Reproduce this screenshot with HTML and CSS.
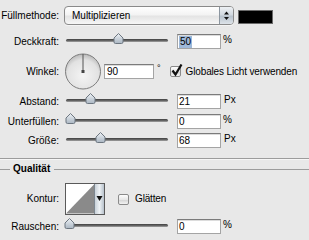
FILE: index.html
```html
<!DOCTYPE html>
<html lang="de">
<head>
<meta charset="utf-8">
<title>Schein nach außen</title>
<link rel="stylesheet" href="styles.css">
</head>
<body>
<div class="panel">
  <div class="row r-blend">
    <span class="label">Füllmethode:</span>
    <div class="select">
      <span class="select-text">Multiplizieren</span>
      <span class="select-arrows">
        <svg width="13" height="17" viewBox="0 0 13 17"><path d="M4 7.5 L6.5 4.5 L9 7.5 Z" fill="#111"/><path d="M4 10 L6.5 13 L9 10 Z" fill="#111"/></svg>
      </span>
    </div>
    <span class="swatch"></span>
  </div>

  <div class="row r-opacity">
    <span class="label">Deckkraft:</span>
    <div class="slider">
      <span class="track"></span>
      <svg class="thumb" style="left:47px" width="11" height="11" viewBox="0 0 11 11"><defs><linearGradient id="tg1" x1="0" y1="0" x2="0" y2="1"><stop offset="0" stop-color="#eef2f6"/><stop offset="1" stop-color="#aab6c2"/></linearGradient></defs><path d="M5.5 0.5 L10 5 L10 9 Q10 10.5 8.5 10.5 L2.5 10.5 Q1 10.5 1 9 L1 5 Z" fill="url(#tg1)" stroke="#6d7680"/></svg>
    </div>
    <span class="field"><span class="sel">50</span></span>
    <span class="unit">%</span>
  </div>

  <div class="row r-angle">
    <span class="label">Winkel:</span>
    <svg class="dial" width="38" height="37" viewBox="0 0 38 37">
      <defs>
        <radialGradient id="dg" cx="0.5" cy="0.62" r="0.6"><stop offset="0" stop-color="#f4f4f4"/><stop offset="0.75" stop-color="#e2e2e2"/><stop offset="1" stop-color="#bdbdbd"/></radialGradient>
      </defs>
      <circle cx="19" cy="18.5" r="17.5" fill="url(#dg)" stroke="#7d7d7d"/>
      <line x1="19" y1="18.5" x2="19" y2="1" stroke="#555" stroke-width="1"/>
      <rect x="17.5" y="17" width="3" height="3" fill="#444"/>
    </svg>
    <span class="field field-wide">90</span>
    <span class="degree">°</span>
    <span class="checkbox checked">
      <svg width="14" height="14" viewBox="0 0 14 14"><path d="M2.5 6.5 L5.5 10.5 L11.5 0.5" fill="none" stroke="#111" stroke-width="2.2"/></svg>
    </span>
    <span class="check-label">Globales Licht verwenden</span>
  </div>

  <div class="row r-distance">
    <span class="label">Abstand:</span>
    <div class="slider">
      <span class="track"></span>
      <svg class="thumb" style="left:19px" width="11" height="11" viewBox="0 0 11 11"><path d="M5.5 0.5 L10 5 L10 9 Q10 10.5 8.5 10.5 L2.5 10.5 Q1 10.5 1 9 L1 5 Z" fill="url(#tg1)" stroke="#6d7680"/></svg>
    </div>
    <span class="field">21</span>
    <span class="unit unit-px">Px</span>
  </div>

  <div class="row r-choke">
    <span class="label">Unterfüllen:</span>
    <div class="slider">
      <span class="track"></span>
      <svg class="thumb" style="left:-1px" width="11" height="11" viewBox="0 0 11 11"><path d="M5.5 0.5 L10 5 L10 9 Q10 10.5 8.5 10.5 L2.5 10.5 Q1 10.5 1 9 L1 5 Z" fill="url(#tg1)" stroke="#6d7680"/></svg>
    </div>
    <span class="field">0</span>
    <span class="unit">%</span>
  </div>

  <div class="row r-size">
    <span class="label">Größe:</span>
    <div class="slider">
      <span class="track"></span>
      <svg class="thumb" style="left:29px" width="11" height="11" viewBox="0 0 11 11"><path d="M5.5 0.5 L10 5 L10 9 Q10 10.5 8.5 10.5 L2.5 10.5 Q1 10.5 1 9 L1 5 Z" fill="url(#tg1)" stroke="#6d7680"/></svg>
    </div>
    <span class="field">68</span>
    <span class="unit unit-px">Px</span>
  </div>

  <div class="separator"></div>

  <div class="legend">
    <span class="legend-line legend-line-left"></span>
    <span class="legend-text">Qualität</span>
    <span class="legend-line legend-line-right"></span>
  </div>

  <div class="row r-contour">
    <span class="label">Kontur:</span>
    <div class="contour">
      <svg class="contour-curve" width="29" height="30" viewBox="0 0 29 30"><rect width="29" height="30" fill="#fff"/><path d="M0 30 L29 0 L29 30 Z" fill="#8a8a8a"/></svg>
      <span class="contour-btn">
        <svg width="9" height="10" viewBox="0 0 9 10"><path d="M1.5 2 L7.5 2 L4.5 7 Z" fill="#111"/></svg>
      </span>
    </div>
    <span class="checkbox cb-smooth"></span>
    <span class="check-label cl-smooth">Glätten</span>
  </div>

  <div class="row r-noise">
    <span class="label">Rauschen:</span>
    <div class="slider">
      <span class="track"></span>
      <svg class="thumb" style="left:-2px" width="11" height="11" viewBox="0 0 11 11"><path d="M5.5 0.5 L10 5 L10 9 Q10 10.5 8.5 10.5 L2.5 10.5 Q1 10.5 1 9 L1 5 Z" fill="url(#tg1)" stroke="#6d7680"/></svg>
    </div>
    <span class="field">0</span>
    <span class="unit">%</span>
  </div>
</div>
</body>
</html>
```

FILE: styles.css
```css
html, body {
  margin: 0;
  padding: 0;
  background: #e8e8e8;
}

body {
  width: 309px;
  height: 240px;
  overflow: hidden;
  font-family: "Liberation Sans", Arial, sans-serif;
  font-size: 10px;
  color: #000;
}

.panel {
  display: flex;
  flex-direction: column;
  padding-top: 6px;
}

.row {
  display: flex;
  align-items: center;
}

.label {
  width: 59px;
  flex-shrink: 0;
  text-align: right;
  line-height: 12px;
  white-space: nowrap;
}

.r-blend { height: 19px; }
.r-opacity { height: 15px; margin-top: 9px; }
.r-angle { height: 37px; margin-top: 4px; }
.r-distance { height: 15px; margin-top: 4px; }
.r-choke { height: 15px; margin-top: 5px; }
.r-size { height: 15px; margin-top: 4px; }
.r-contour { height: 32px; margin-top: 8px; }
.r-noise { height: 15px; margin-top: 4px; }

/* select */
.select {
  margin-left: 5px;
  width: 170px;
  height: 19px;
  box-sizing: border-box;
  border: 1px solid #8a8a8a;
  border-radius: 4px;
  background: linear-gradient(#ffffff 0%, #f3f3f3 45%, #e4e4e4 55%, #f6f6f6 100%);
  display: flex;
  align-items: center;
  overflow: hidden;
  box-shadow: 0 1px 0 #f4f4f4;
}

.select-text {
  flex: 1;
  padding-left: 7px;
  line-height: 12px;
}

.select-arrows {
  width: 13px;
  height: 100%;
  border-left: 1px solid #8c96a0;
  background: linear-gradient(#eef1f4 0%, #d2d9e0 45%, #b9c3cd 55%, #dde3e9 100%);
  display: flex;
  align-items: center;
  justify-content: center;
}

.swatch {
  align-self: flex-start;
  margin-top: 4px;
  margin-left: 4px;
  width: 35px;
  height: 14px;
  box-sizing: border-box;
  background: #000;
  border: 1px solid #6a6a6a;
}

/* slider */
.slider {
  position: relative;
  margin-left: 7px;
  width: 102px;
  height: 15px;
  flex-shrink: 0;
}

.track {
  display: block;
  margin-top: 5px;
  height: 3px;
  border-radius: 2px;
  background: linear-gradient(#3f3f3f, #6a6a6a 60%, #a9a9a9);
}

.thumb {
  position: absolute;
  top: -1px;
  display: block;
}

/* text fields */
.field {
  margin-left: 9px;
  width: 44px;
  height: 15px;
  box-sizing: border-box;
  background: #fff;
  border: 1px solid #a4a4a4;
  border-top-color: #7b7b7b;
  box-shadow: inset 0 1px 0 #dcdcdc;
  padding-left: 1px;
  line-height: 13px;
  flex-shrink: 0;
}

.field-wide {
  margin-left: 2px;
  width: 50px;
  padding-left: 2px;
}

.sel {
  display: inline-block;
  background: #9fb9d9;
  padding: 0 1px 0 1px;
  line-height: 12px;
}

.unit {
  align-self: flex-start;
  margin-left: 2px;
  line-height: 12px;
}

.unit-px {
  margin-left: 3px;
}

/* angle */
.dial {
  display: block;
  margin-left: 5px;
  flex-shrink: 0;
}

.degree {
  align-self: flex-start;
  margin-top: 10px;
  margin-left: 3px;
  font-size: 9px;
  line-height: 10px;
}

.checkbox {
  position: relative;
  margin-left: 9px;
  width: 11px;
  height: 11px;
  box-sizing: border-box;
  border: 1px solid #8a8a8a;
  border-radius: 2px;
  background: linear-gradient(#fdfdfd, #e6e6e6 55%, #d8d8d8 60%, #f2f2f2);
  flex-shrink: 0;
}

.checked svg {
  position: absolute;
  left: -1px;
  top: -3px;
}

.check-label {
  margin-left: 5px;
  line-height: 12px;
  white-space: nowrap;
  letter-spacing: -0.15px;
}

/* separator and group */
.separator {
  margin-top: 10px;
  height: 1px;
  background: #9c9c9c;
  border-bottom: 1px solid #f6f6f6;
}

.legend {
  margin-top: 3px;
  height: 12px;
  display: flex;
  align-items: center;
}

.legend-line {
  height: 1px;
  background: #9c9c9c;
}

.legend-line-left {
  width: 10px;
}

.legend-line-right {
  flex: 1;
}

.legend-text {
  font-weight: bold;
  margin: 0 4px 0 3px;
  line-height: 12px;
}

/* contour */
.contour {
  margin-left: 6px;
  width: 40px;
  height: 32px;
  box-sizing: border-box;
  border: 1px solid #5a5a5a;
  display: flex;
  flex-shrink: 0;
  background: #fff;
}

.contour-curve {
  display: block;
}

.contour-btn {
  flex: 1;
  border-left: 1px solid #7d8790;
  background: linear-gradient(90deg, #c9d1d9, #eef2f5 50%, #b7c1cb);
  display: flex;
  align-items: center;
  justify-content: center;
}

.cb-smooth {
  margin-left: 13px;
}

.cl-smooth {
  margin-left: 6px;
}
```
